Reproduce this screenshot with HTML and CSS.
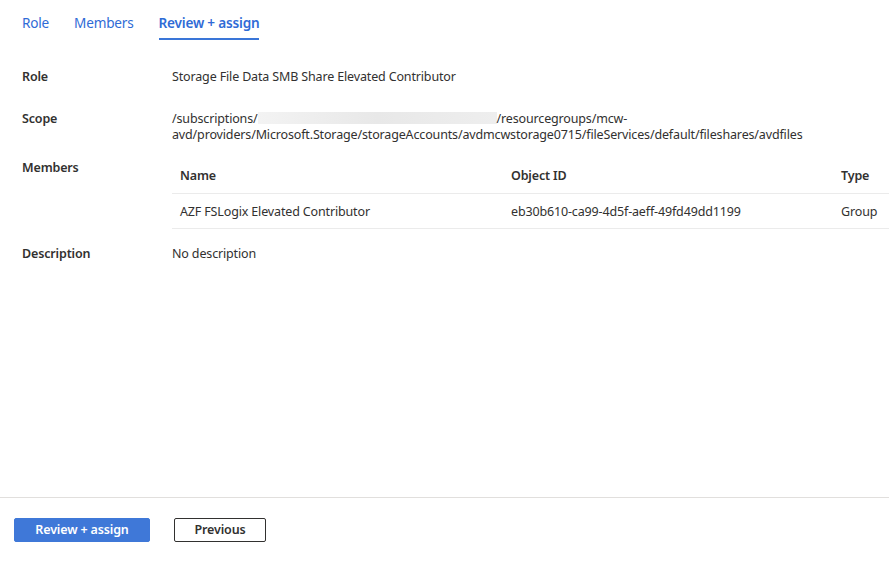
FILE: index.html
```html
<!DOCTYPE html>
<html>
<head>
<meta charset="utf-8">
<link rel="stylesheet" href="styles.css">
</head>
<body>
<div class="page">
  <main class="main">
    <nav class="tabs">
      <span class="tab">Role</span>
      <span class="tab">Members</span>
      <span class="tab active">Review + assign</span>
    </nav>
    <section class="details">
      <div class="row row-role">
        <div class="label">Role</div>
        <div class="value">Storage File Data SMB Share Elevated Contributor</div>
      </div>
      <div class="row row-scope">
        <div class="label">Scope</div>
        <div class="value">/subscriptions/<span class="redacted"></span>/resourcegroups/mcw-avd/providers/Microsoft.Storage/storageAccounts/avdmcwstorage0715/fileServices/default/fileshares/avdfiles</div>
      </div>
      <div class="row row-members">
        <div class="label">Members</div>
        <div class="value table-wrap">
          <table class="members">
            <thead>
              <tr><th class="c-name">Name</th><th class="c-id">Object ID</th><th class="c-type">Type</th></tr>
            </thead>
            <tbody>
              <tr><td>AZF FSLogix Elevated Contributor</td><td>eb30b610-ca99-4d5f-aeff-49fd49dd1199</td><td>Group</td></tr>
            </tbody>
          </table>
        </div>
      </div>
      <div class="row row-desc">
        <div class="label">Description</div>
        <div class="value">No description</div>
      </div>
    </section>
  </main>
  <footer class="footer">
    <button class="btn btn-primary">Review + assign</button>
    <button class="btn btn-secondary">Previous</button>
  </footer>
</div>
</body>
</html>
```
FILE: styles.css
```css
* { box-sizing: border-box; }
html, body { margin: 0; padding: 0; background: #fff; }
body {
  font-family: "Noto Sans", "Open Sans", sans-serif;
  font-size: 12.5px;
  letter-spacing: -0.15px;
  color: #323130;
  overflow: hidden;
}
.page {
  display: flex;
  flex-direction: column;
  height: 100vh;
}
.main { flex: 1; }
.tabs {
  display: flex;
  gap: 25px;
  padding: 12px 0 0 22px;
  height: 40px;
}
.tab {
  font-size: 13.6px;
  letter-spacing: -0.2px;
  line-height: 22px;
  color: #2f6bd6;
  height: 28px;
}
.tab.active {
  font-weight: 600;
  border-bottom: 2px solid #3a76d8;
}
.details { padding-left: 22px; }
.row { display: flex; }
.label {
  width: 150px;
  flex: none;
  font-weight: 600;
  line-height: 16px;
}
.value {
  flex: 1;
  line-height: 16px;
  min-width: 0;
}
.row-role { margin-top: 29px; }
.row-scope { margin-top: 26px; }
.row-members { margin-top: 17px; }
.row-desc { margin-top: 17px; }
.redacted {
  display: inline-block;
  width: 239px;
  height: 12px;
  vertical-align: -1px;
  background: linear-gradient(90deg, #f3f3f3, #e8e8e8 50%, #eeeeee);
}
.table-wrap { margin-top: -1px; }
.members {
  width: 100%;
  border-collapse: collapse;
}
.members th, .members td {
  text-align: left;
  padding: 0 8px;
  height: 35px;
  border-bottom: 1px solid #ebebeb;
  font-weight: 400;
  white-space: nowrap;
}
.members th { font-weight: 600; height: 34px; }
.members td { padding-top: 3px; }
.c-name { width: 331px; }
.c-id { width: 330px; }
.footer {
  border-top: 1px solid #e1dfdd;
  height: 65px;
  padding: 20px 14px;
  display: flex;
  gap: 24px;
  align-items: flex-start;
}
.btn {
  font-family: inherit;
  font-size: 12.5px;
  letter-spacing: -0.15px;
  font-weight: 600;
  height: 24px;
  border-radius: 2px;
  padding: 0;
  line-height: 20px;
}
.btn-primary {
  width: 136px;
  background: #3f78d8;
  color: #fff;
  border: 1px solid #3f78d8;
}
.btn-secondary {
  width: 92px;
  background: #fff;
  color: #323130;
  border: 1px solid #323130;
}
```
